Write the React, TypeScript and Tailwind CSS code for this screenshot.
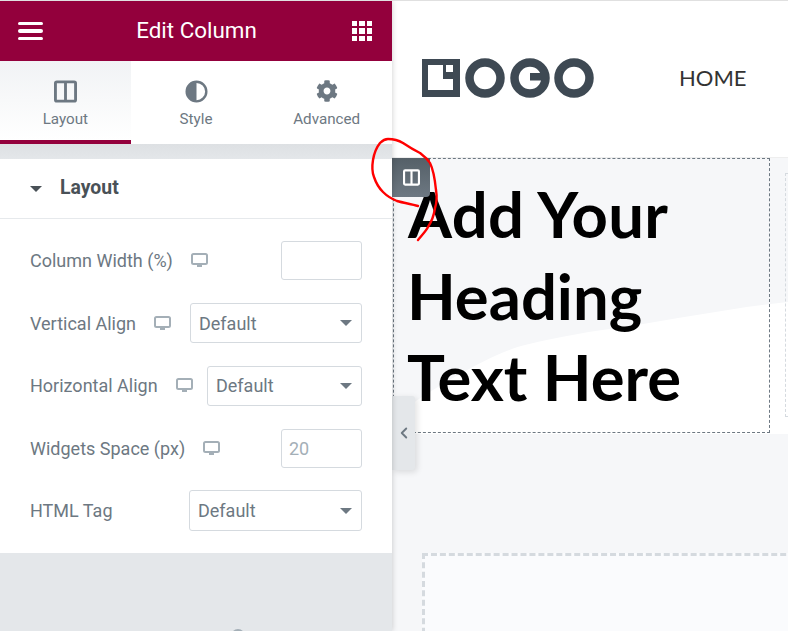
import { ChevronLeft } from "lucide-react";
import { FaCog } from "react-icons/fa";

const ROWS = [
  { label: "Column Width (%)", kind: "number", device: true, w: "w-[81px]", h: "h-[39px]" },
  { label: "Vertical Align", kind: "select", device: true, w: "w-[172px]", h: "h-[40px]" },
  { label: "Horizontal Align", kind: "select", device: true, w: "w-[155px]", h: "h-[40px]" },
  { label: "Widgets Space (px)", kind: "number", device: true, value: "20", w: "w-[81px]", h: "h-[39px]" },
  { label: "HTML Tag", kind: "select", device: false, w: "w-[173px]", h: "h-[41px]" },
];

function ColumnsIcon({ className }: { className?: string }) {
  return (
    <svg viewBox="0 0 24 24" className={className} fill="none" stroke="currentColor" strokeWidth="3">
      <rect x="1.5" y="2" width="21" height="20" rx="1.5" />
      <path d="M12 2v20" />
    </svg>
  );
}

function DesktopIcon() {
  return (
    <svg width="17" height="15" viewBox="0 0 17 15" className="shrink-0 text-[#a4afb7]">
      <rect x="1" y="1" width="15" height="10" rx="1.5" fill="none" stroke="currentColor" strokeWidth="2" />
      <rect x="6" y="12" width="5" height="2" fill="currentColor" />
    </svg>
  );
}

function Logo() {
  return (
    <svg width="172" height="40" viewBox="0 0 172 40" className="shrink-0 blur-[0.4px]">
      <rect x="0" y="1" width="38" height="38" fill="#3e4953" />
      <path d="M6 7H21V21H31V32H6Z" fill="#fff" />
      <rect x="24" y="7" width="7" height="7" fill="#fff" />
      <g fill="none" stroke="#3e4953" strokeWidth="8.5">
        <circle cx="63" cy="20" r="15.5" />
        <circle cx="108" cy="20" r="15.5" />
        <circle cx="152" cy="20" r="15.5" />
      </g>
      <rect x="108" y="15" width="18" height="7.5" fill="#3e4953" />
    </svg>
  );
}

function Tab({ label, active, icon }: { label: string; active?: boolean; icon: React.ReactNode }) {
  return (
    <div
      className={`w-[131px] h-[83px] flex flex-col items-center pt-[18px] text-[#6d7882] ${
        active ? "bg-gradient-to-b from-[#f1f3f5] to-white border-b-4 border-[#93003c]" : "bg-white"
      }`}
    >
      <div className="w-[24px] h-[24px] flex items-center justify-center">{icon}</div>
      <span className="mt-[6px] text-[15.2px] leading-[20px]">{label}</span>
    </div>
  );
}

function Sidebar() {
  return (
    <aside className="relative z-20 w-[392px] h-full shrink-0 bg-[#e4e7ea] shadow-[0_0_6px_rgba(0,0,0,0.2)] font-['Roboto',sans-serif] overflow-hidden">
      <header className="h-[60px] bg-[#93003c] flex items-center justify-between pl-[18px] pr-[20px] text-white">
        <div className="flex flex-col gap-[4px] w-[25px]">
          <span className="h-[3.5px] rounded-full bg-white" />
          <span className="h-[3.5px] rounded-full bg-white" />
          <span className="h-[3.5px] rounded-full bg-white" />
        </div>
        <h1 className="text-[22.4px] font-normal mb-[1px] ml-[-2px]">Edit Column</h1>
        <div className="grid grid-cols-3 gap-[2px] w-[20px]">
          {Array.from({ length: 9 }).map((_, i) => (
            <span key={i} className="h-[5.4px] bg-white" />
          ))}
        </div>
      </header>

      <nav className="flex bg-white">
        <Tab label="Layout" active icon={<ColumnsIcon className="w-[23px] h-[23px]" />} />
        <Tab
          label="Style"
          icon={
            <svg viewBox="0 0 24 24" className="w-[23px] h-[23px]">
              <path
                fill="currentColor"
                fillRule="evenodd"
                d="M12 .5a11.5 11.5 0 1 0 0 23 11.5 11.5 0 0 0 0-23zM12 3a9 9 0 0 1 0 18z"
              />
            </svg>
          }
        />
        <Tab label="Advanced" icon={<FaCog className="w-[22px] h-[22px]" />} />
      </nav>

      <div className="h-[15px] bg-gradient-to-b from-[#dde0e3] to-[#e4e7ea]" />

      <section className="bg-white h-[394px]">
        <div className="h-[60px] border-b border-[#e6e9ec] flex items-center pl-[30px] pb-[2px] text-[#495157]">
          <span className="w-0 h-0 mt-[2px] border-x-[6px] border-x-transparent border-t-[6px] border-t-[#495157]" />
          <h2 className="ml-[18px] text-[19.4px] font-bold">Layout</h2>
        </div>
        <div className="pt-[10.25px] pl-[30px] pr-[30px] grid auto-rows-[62.5px] items-center">
          {ROWS.map((r) => (
            <div key={r.label} className="flex items-center justify-between text-[#6d7882] text-[18px]">
              <div className="flex items-center gap-[18px]">
                <span>{r.label}</span>
                {r.device && <DesktopIcon />}
              </div>
              <div
                className={`${r.w} ${r.h} border border-[#d5dadf] rounded-[3px] bg-white flex items-center justify-between ${
                  r.kind === "select" ? "pl-[8px]" : "pl-[7px]"
                } pr-[9px]`}
              >
                {r.kind === "select" ? (
                  <>
                    <span>Default</span>
                    <span className="w-0 h-0 border-x-[6px] border-x-transparent border-t-[6px] border-t-[#6d7882]" />
                  </>
                ) : (
                  <span className="text-[#a4afb7]">{r.value}</span>
                )}
              </div>
            </div>
          ))}
        </div>
      </section>

      <div className="relative">
        <span className="absolute left-[231px] top-[76px] w-[14px] h-[14px] rounded-full bg-[#a4afb7]" />
      </div>
    </aside>
  );
}

function Preview() {
  return (
    <main className="relative flex-1 h-full font-['Lato',sans-serif] overflow-hidden">
      <header className="h-[157px] bg-white border-b border-[#eeeeee] flex items-center pl-[30px] pb-[3px]">
        <Logo />
        <span className="ml-[85px] text-[22px] text-[#333333]">HOME</span>
      </header>

      <section className="relative h-[473px] bg-[#f6f7f9] overflow-hidden">
        <svg className="absolute left-0 top-[140px]" width="396" height="136" viewBox="0 0 396 136">
          <path
            fill="#fff"
            d="M0 120C40 90 100 55 133 47C170 38 200 33 233 29C290 20 340 10 396 4V136H0Z"
          />
        </svg>

        <div className="relative flex items-start pl-[1px]">
          <div className="w-[377px] h-[275px] shrink-0 border border-dashed border-[#6d7882] pl-[13px] pt-[14px]">
            <h2 className="text-[63.4px] leading-[81.5px] font-bold text-black">
              <span className="ml-[1px] tracking-[0.3px]">Add Your</span>
              <br />
              Heading
              <br />
              Text Here
            </h2>
          </div>
          <div className="ml-[15px] mt-[15px] w-[20px] h-[244px] shrink-0 border border-dashed border-[#d5dadf]" />
        </div>

        <div className="relative ml-[30px] mt-[120px] w-[400px] h-[90px] bg-[#fafbfd] border-[3px] border-dashed border-[#d5dadf]" />

        <div className="absolute left-0 top-0 w-[38px] h-[39px] rounded-br-[4px] bg-gradient-to-b from-[#556068] to-[#6d7882] flex items-center justify-center text-white">
          <ColumnsIcon className="w-[17px] h-[17px]" />
        </div>

        <div className="absolute left-0 top-[238px] w-[23px] h-[74px] rounded-r-[3px] bg-[#e4e7ea] shadow-[2px_2px_6px_rgba(0,0,0,0.12)] flex items-center justify-center text-[#6d7882]">
          <ChevronLeft className="w-[18px] h-[18px]" strokeWidth={2.5} />
        </div>
      </section>
    </main>
  );
}

export default function App() {
  return (
    <div className="relative w-[788px] h-[631px] overflow-hidden bg-white border-t border-[#e0e0e0] flex">
      <Sidebar />
      <Preview />
      {/* hand drawn annotation over the column handle */}
      <svg className="absolute left-0 top-[-1px] pointer-events-none z-30" width="788" height="631" viewBox="0 0 788 631">
        <path
          d="M418 240C422 235 426 231 428 227C432 221 434 215 435 208C437 202 437 196 436 190C435 180 434 171 430 163C427 158 424 156 420 153C414 150 409 147 403 143C398 140 393 139 388 139C384 139 382 141 380 143C376 148 374 154 373 160C372 166 372 172 374 177C376 183 379 188 383 192C387 196 392 199 397 201C404 203 411 204 418 206"
          fill="none"
          stroke="#ff0000"
          strokeWidth="2.4"
          strokeLinecap="round"
        />
      </svg>
    </div>
  );
}
